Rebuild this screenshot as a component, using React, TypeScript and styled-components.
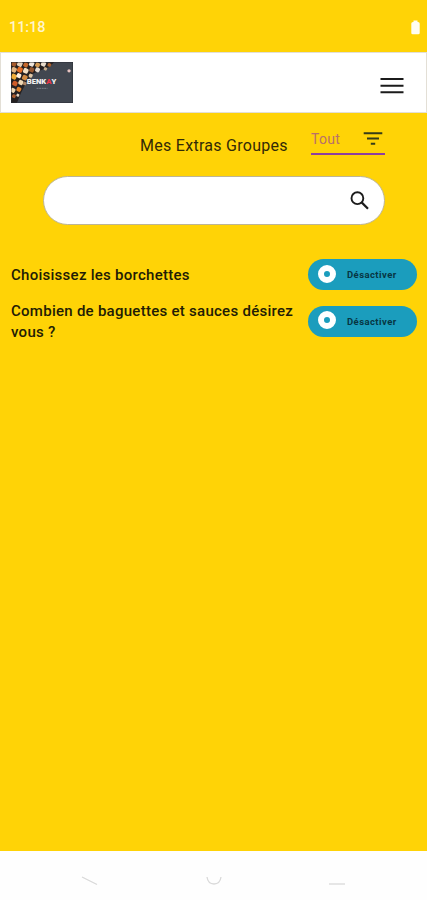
import React from 'react';
import styled, { createGlobalStyle } from 'styled-components';

const Global = createGlobalStyle`
  * { box-sizing: border-box; }
  body { margin: 0; font-family: Roboto, "Liberation Sans", sans-serif; color: #17150a; }
  button, input { font-family: inherit; margin: 0; padding: 0; border: 0; background: none; }
`;

const Screen = styled.div`
  width: 427px;
  height: 900px;
  display: flex;
  flex-direction: column;
  background: #ffd306;
  overflow: hidden;
`;

const StatusBar = styled.div`
  height: 52px;
  flex: none;
  display: flex;
  align-items: center;
  justify-content: space-between;
  padding: 2px 7px 0 9px;
  color: #fff5cc;
  font-size: 14.5px;
  font-weight: 500;
  letter-spacing: -0.1px;
`;

const Header = styled.header`
  height: 61px;
  flex: none;
  display: flex;
  align-items: flex-start;
  justify-content: space-between;
  padding: 9px 21px 0 10px;
  background: #fff;
  border: 1px solid #e3dfd6;
`;

const MenuButton = styled.button`
  display: flex;
  width: 26px;
  height: 20px;
  margin-top: 14px;
`;

const Main = styled.main`
  flex: 1;
  display: flex;
  flex-direction: column;
`;

const TitleRow = styled.div`
  height: 43px;
  display: flex;
  align-items: flex-start;
  justify-content: space-between;
  padding: 12px 42px 0 140px;
`;

const Title = styled.h1`
  margin: 11px 0 0;
  font-size: 16px;
  line-height: 20px;
  font-weight: 400;
  letter-spacing: 0.28px;
  white-space: nowrap;
  color: #332a06;
`;

const Filter = styled.button`
  width: 74px;
  height: 30px;
  display: flex;
  align-items: flex-start;
  justify-content: space-between;
  padding: 4px 2px 0 0;
  border-bottom: 2px solid #8d3fa0;
  color: #b8706a;
  font-size: 14px;
  line-height: 20px;
  letter-spacing: 0.3px;
`;

const FilterGlyph = styled.svg`
  width: 20px;
  height: 14px;
  margin-top: 2px;
`;

const Search = styled.label`
  width: 342px;
  height: 49px;
  margin: 20px 0 0 43px;
  display: flex;
  align-items: center;
  padding: 0 15px 0 24px;
  border: 1px solid #bdb595;
  border-radius: 25px;
  background: #fff;
`;

const SearchInput = styled.input`
  flex: 1;
  min-width: 0;
  outline: none;
  font-size: 16px;
`;

const List = styled.ul`
  list-style: none;
  margin: 34px 10px 0 11px;
  padding: 0;
  display: flex;
  flex-direction: column;
  gap: 10px;
`;

const Item = styled.li`
  display: flex;
  align-items: center;
  justify-content: space-between;
`;

const ItemLabel = styled.span`
  width: 290px;
  padding-top: 1px;
  font-size: 15px;
  line-height: 20.5px;
  font-weight: 500;
  letter-spacing: 0.27px;
  color: #221c05;
`;

const Toggle = styled.button`
  width: 109px;
  height: 31px;
  flex: none;
  display: flex;
  align-items: center;
  gap: 11px;
  padding-left: 10px;
  border-radius: 16px;
  background: #1b9dbd;
  color: #073543;
  font-size: 9.5px;
  font-weight: 700;
  letter-spacing: 0.43px;
`;

const Knob = styled.span`
  width: 18px;
  height: 18px;
  border-radius: 50%;
  border: 6.5px solid #fff;
  background: #1b9dbd;
  margin-top: -2px;
`;

const NavBar = styled.nav`
  height: 49px;
  flex: none;
  display: flex;
  justify-content: space-between;
  padding: 25px 81px 0 81px;
  background: #fefefe;
`;

const NavGlyph = styled.svg`
  width: 18px;
  height: 10px;
  fill: none;
  stroke: #d9d9d9;
  stroke-width: 1.3;
`;

const dots: [number, number, number, string][] = [
  [3, 2, 2.4, '#a65a2c'], [9, 2, 2.6, '#e8d3bd'], [15, 3, 2.3, '#c5682d'], [21, 2, 2.5, '#f0e6dc'],
  [27, 3, 2.3, '#d59a52'], [33, 2, 2.4, '#e9dccb'], [39, 3, 1.8, '#a9612f'], [3, 8, 2.6, '#e2b584'],
  [9, 8, 2.7, '#e46d25'], [15, 9, 2.6, '#f2dfc3'], [21, 8, 2.4, '#99582e'], [27, 8, 2.3, '#e9ded3'],
  [35, 7, 1.6, '#c9ad8b'], [3, 15, 2.7, '#f0ac39'], [8, 14, 2.3, '#fff0df'], [14, 16, 2.6, '#d28b42'],
  [20, 14, 1.9, '#e2c8a6'], [4, 22, 2.5, '#cf5c27'], [10, 21, 2.4, '#eed7b4'], [14, 22, 1.7, '#b08663'],
  [2, 29, 2.3, '#efd6b1'], [8, 28, 2.3, '#df8330'], [3, 35, 1.8, '#a75a2e'], [7, 34, 1.4, '#e6d6c2'],
];

const Logo = () => (
  <svg width="62" height="41" viewBox="0 0 63 42" preserveAspectRatio="none" aria-label="Benkay">
    <rect width="63" height="42" fill="#414750" />
    <path d="M0 0H44L39 5L29 9L20 13L15 22L10 32L6 42H0Z" fill="#252020" />
    {dots.map(([x, y, r, c], i) => (
      <rect key={i} x={x - r} y={y - r} width={r * 2} height={r * 2} rx={r * 0.6} fill={c}
        transform={`rotate(25 ${x} ${y})`} />
    ))}
    <rect width="63" height="42" fill="none" stroke="#292d34" strokeWidth="1" />
    <text x="16" y="22.8" fontFamily="Roboto, sans-serif" fontSize="8" fontWeight="900" textLength="30" lengthAdjust="spacingAndGlyphs" fill="#f3f1f1">
      BENK<tspan fill="#ed3545">A</tspan>Y
    </text>
    <path d="M26 27H37" stroke="#7c8189" strokeWidth="1" strokeDasharray="2 .6" />
    <circle cx="59" cy="9" r="1.7" fill="#e8c4c2" />
  </svg>
);

const items = ['Choisissez les borchettes', 'Combien de baguettes et sauces désirez vous ?'];

export default function App() {
  return (
    <>
      <Global />
      <Screen>
        <StatusBar>
          <span>11:18</span>
          <svg width="9" height="15" viewBox="0 0 9 15" fill="#fffdf2">
            <path d="M2.5 .5H6.5V2H7Q8.7 2 8.7 3.5V13Q8.7 14.3 7.3 14.3H1.7Q.3 14.3 .3 13V3.5Q.3 2 2 2H2.5Z" />
          </svg>
        </StatusBar>
        <Header>
          <Logo />
          <MenuButton aria-label="Menu">
            <svg width="26" height="20" viewBox="0 0 26 20" stroke="#1b1b1b" strokeWidth="2">
              <path d="M1.5 3H24.5M1.5 9.7H24.5M1.5 16.2H24.5" />
            </svg>
          </MenuButton>
        </Header>
        <Main>
          <TitleRow>
            <Title>Mes Extras Groupes</Title>
            <Filter>
              Tout
              <FilterGlyph viewBox="0 0 20 14" stroke="#363c19" strokeWidth="1.9">
                <path d="M.7 2.2H19.3M4 7.5H16M7.8 12.8H12.2" />
              </FilterGlyph>
            </Filter>
          </TitleRow>
          <Search>
            <SearchInput aria-label="Rechercher" />
            <svg width="19" height="20" viewBox="0 0 19 20" fill="none" stroke="#1c1c1c" strokeWidth="1.9">
              <circle cx="7.4" cy="7.2" r="5.9" />
              <path d="M11.6 11.4L18 17.8" strokeWidth="2.2" />
            </svg>
          </Search>
          <List>
            {items.map((label) => (
              <Item key={label}>
                <ItemLabel>{label}</ItemLabel>
                <Toggle>
                  <Knob />
                  Désactiver
                </Toggle>
              </Item>
            ))}
          </List>
        </Main>
        <NavBar>
          <NavGlyph viewBox="0 0 18 10"><path d="M1 1L16 8.5" /></NavGlyph>
          <NavGlyph viewBox="0 0 18 10"><path d="M2 1Q3 8 9 8Q15 8 16 1" /></NavGlyph>
          <NavGlyph viewBox="0 0 18 10"><path d="M1 8H17" /></NavGlyph>
        </NavBar>
      </Screen>
    </>
  );
}
